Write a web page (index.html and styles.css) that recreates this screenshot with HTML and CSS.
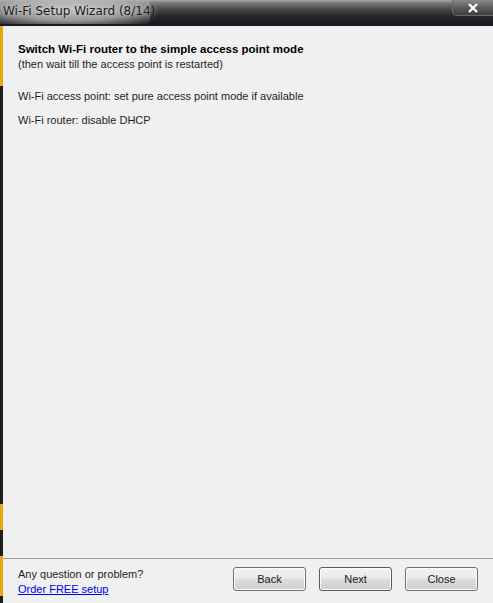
FILE: index.html
```html
<!DOCTYPE html>
<html>
<head>
<meta charset="utf-8">
<link rel="stylesheet" href="styles.css">
</head>
<body>
<div class="window">
  <div class="titlebar">
    <span class="title">Wi-Fi Setup Wizard (8/14)</span>
    <div class="closebtn"><svg width="12" height="10" viewBox="0 0 12 10"><path d="M2 1 L10 9 M10 1 L2 9" stroke="#fff" stroke-width="2.4"/></svg></div>
  </div>
  <div class="frame">
    <div class="edge"><span class="y1"></span><span class="y2"></span><span class="y3"></span></div>
    <div class="client">
      <div class="content">
        <div class="heading">Switch Wi-Fi router to the simple access point mode</div>
        <div class="sub">(then wait till the access point is restarted)</div>
        <div class="line first">Wi-Fi access point: set pure access point mode if available</div>
        <div class="line">Wi-Fi router: disable DHCP</div>
      </div>
      <div class="footer">
        <div class="help">
          <div>Any question or problem?</div>
          <a class="link" href="#">Order FREE setup</a>
        </div>
        <div class="buttons">
          <button class="btn">Back</button>
          <button class="btn next">Next</button>
          <button class="btn">Close</button>
        </div>
      </div>
    </div>
  </div>
</div>
</body>
</html>
```
FILE: styles.css
```css
html, body { margin: 0; padding: 0; }
body { width: 493px; height: 603px; overflow: hidden; font-family: "Liberation Sans", sans-serif; }
.window { width: 493px; height: 603px; display: flex; flex-direction: column; background: #f0f0f0; }
.titlebar {
  height: 26px; flex: none; position: relative;
  background: linear-gradient(to bottom, #a8a8a8 0px, #7a7a7a 3px, #4a4a4a 9px, #23272b 16px, #15181c 26px);
}
.titlebar::before {
  content: ""; position: absolute; left: -10px; top: -6px; width: 160px; height: 30px;
  background: radial-gradient(ellipse at center, rgba(200,200,200,0.95) 0%, rgba(180,180,180,0.8) 55%, rgba(120,120,120,0) 100%);
}
.title {
  position: absolute; left: 3px; top: 4px;
  font-family: "DejaVu Sans", sans-serif; font-size: 12px; color: #1c1c1c;
  text-shadow: 0 0 4px rgba(255,255,255,0.7);
}
.closebtn {
  position: absolute; right: 0; top: 0; width: 41px; height: 16px;
  border: 1px solid #6a6a6a; border-top: none; border-right: none; border-radius: 0 0 0 5px;
  background: linear-gradient(to bottom, #8a8a8a, #5c5c5c 50%, #3e3e3e);
  display: flex; align-items: center; justify-content: center; box-sizing: border-box;
}
.frame { flex: 1; display: flex; }
.edge { width: 3px; background: #1f1f1f; position: relative; flex: none; }
.edge span { position: absolute; left: 0; width: 3px; background: #e8a514; }
.edge .y1 { top: 0; height: 60px; }
.edge .y2 { top: 478px; height: 26px; }
.edge .y3 { top: 530px; height: 40px; }
.client { flex: 1; display: flex; flex-direction: column; font-size: 11px; color: #1e1e1e; }
.content { flex: 1; padding: 15px 0 0 15px; }
.heading { font-weight: bold; font-size: 11.5px; color: #000; line-height: 16px; }
.sub { line-height: 15px; }
.line { line-height: 14px; margin-top: 10px; }
.line.first { margin-top: 17px; }
.footer { height: 44px; border-top: 1px solid #a0a0a0; display: flex; justify-content: space-between; padding: 0 15px 0 15px; }
.help { padding-top: 8px; line-height: 15px; }
.link { color: #0000ee; text-decoration: underline; }
.buttons { display: flex; gap: 13px; padding-top: 8px; }
.btn {
  width: 73px; height: 24px; box-sizing: border-box; font-family: "Liberation Sans", sans-serif; font-size: 11px; color: #1a1a1a;
  border: 1px solid #707070; border-radius: 3px;
  background: linear-gradient(to bottom, #f2f2f2 0%, #ebebeb 45%, #dddddd 50%, #cfcfcf 100%);
  box-shadow: inset 0 0 0 1px #fcfcfc;
}
.btn.next { border-color: #5a5a5a; }
```
